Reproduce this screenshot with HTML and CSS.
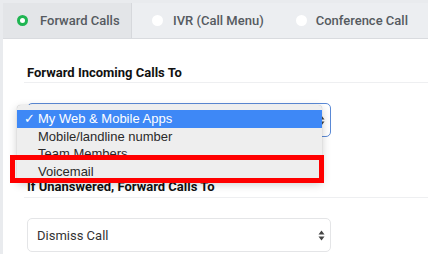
FILE: index.html
```html
<!DOCTYPE html>
<html>
<head>
<meta charset="utf-8">
<link rel="stylesheet" href="styles.css">
</head>
<body>
<div class="card">
  <div class="tabs">
    <div class="tab tab-active tab-1"><span class="radio radio-on"></span><span class="tab-label">Forward Calls</span></div>
    <div class="tab tab-2"><span class="radio"></span><span class="tab-label">IVR (Call Menu)</span></div>
    <div class="tab tab-3"><span class="radio"></span><span class="tab-label">Conference Call</span></div>
  </div>
  <div class="content">
    <div class="section">
      <div class="heading">Forward Incoming Calls To</div>
      <div class="field">
        <div class="select select-focus">
          <span class="select-text"></span>
          <svg class="arrows" width="7" height="11" viewBox="0 0 7 11"><path d="M3.5 0.5 L6.5 4.5 L0.5 4.5 Z M3.5 10.5 L6.5 6.5 L0.5 6.5 Z" fill="#444"/></svg>
        </div>
        <div class="menu">
          <div class="menu-item menu-item-selected"><span class="check">✓</span>My Web &amp; Mobile Apps</div>
          <div class="menu-item">Mobile/landline number</div>
          <div class="menu-item">Team Members</div>
          <div class="menu-item">Voicemail</div>
        </div>
        <div class="highlight-box"></div>
      </div>
    </div>
    <div class="section section-2">
      <div class="heading heading-2">If Unanswered, Forward Calls To</div>
      <div class="field">
        <div class="select">
          <span class="select-text">Dismiss Call</span>
          <svg class="arrows" width="7" height="11" viewBox="0 0 7 11"><path d="M3.5 0.5 L6.5 4.5 L0.5 4.5 Z M3.5 10.5 L6.5 6.5 L0.5 6.5 Z" fill="#444"/></svg>
        </div>
      </div>
    </div>
  </div>
</div>
</body>
</html>
```
FILE: styles.css
```css
html, body {
  margin: 0;
  padding: 0;
  background: #e9ebee;
  overflow: hidden;
  width: 428px;
  height: 254px;
}
body {
  padding: 3px 0 0 3px;
  box-sizing: border-box;
  font-family: Roboto, "Liberation Sans", Arial, sans-serif;
}
.card {
  background: #ffffff;
  width: 425px;
  height: 251px;
  overflow: hidden;
}
.tabs {
  display: flex;
  height: 35px;
  background: #eceef1;
  border-bottom: 1px solid #d9dbdf;
}
.tab {
  display: flex;
  align-items: center;
  height: 35px;
  box-sizing: border-box;
  color: #555a60;
  font-size: 13px;
  font-weight: 500;
  gap: 11px;
  white-space: nowrap;
  flex: none;
}
.tab-1 {
  width: 129px;
  padding-left: 14px;
  gap: 12px;
  background: #e3e5e8;
  border-right: 1px solid #d6d8dc;
}
.tab-2 {
  padding-left: 20px;
  padding-right: 13px;
  gap: 10px;
}
.tab-3 {
  padding-left: 19px;
  gap: 9px;
}
.radio {
  width: 11px;
  height: 11px;
  border-radius: 50%;
  background: #ffffff;
  box-sizing: border-box;
  flex: none;
}
.radio-on {
  border: 3.5px solid #1fb552;
}
.content {
  padding-top: 26px;
}
.section {
  margin-left: 21px;
}
.section-2 {
  margin-top: 42px;
}
.heading {
  font-size: 13px;
  font-weight: 700;
  line-height: 16px;
  color: #111;
  padding: 0 0 1px 3px;
  border-bottom: 1px solid #eeeff1;
  white-space: nowrap;
}
.heading-2 {
  padding-bottom: 2px;
}
.field {
  position: relative;
  margin: 20px 0 0 3px;
  width: 304px;
}
.select {
  height: 34px;
  box-sizing: border-box;
  border: 1px solid #e4e5e7;
  border-radius: 5px;
  display: flex;
  align-items: center;
  justify-content: space-between;
  padding: 0 5px 0 9px;
  font-size: 13px;
  color: #333;
  background: #fff;
}
.select-focus {
  border-color: #5b8ad6;
}
.arrows {
  display: block;
}
.menu {
  position: absolute;
  left: -10px;
  top: 2px;
  width: 305px;
  padding: 5px 0 0;
  height: 71px;
  background: #eeeeee;
  border-radius: 4px;
  box-shadow: 0 3px 10px rgba(0,0,0,0.2), 0 0 1px rgba(0,0,0,0.3);
  font-family: "Liberation Sans", Arial, sans-serif;
  font-size: 13px;
  color: #2a2a2a;
  overflow: hidden;
}
.menu-item {
  height: 17.5px;
  line-height: 17.5px;
  padding-left: 21px;
  position: relative;
  white-space: nowrap;
}
.menu-item-selected {
  background: #3e88f6;
  color: #fff;
}
.check {
  position: absolute;
  left: 7px;
  top: 0;
}
.highlight-box {
  position: absolute;
  left: -17px;
  top: 52px;
  width: 314px;
  height: 28px;
  box-sizing: border-box;
  border: 5px solid #ff0000;
}
```
